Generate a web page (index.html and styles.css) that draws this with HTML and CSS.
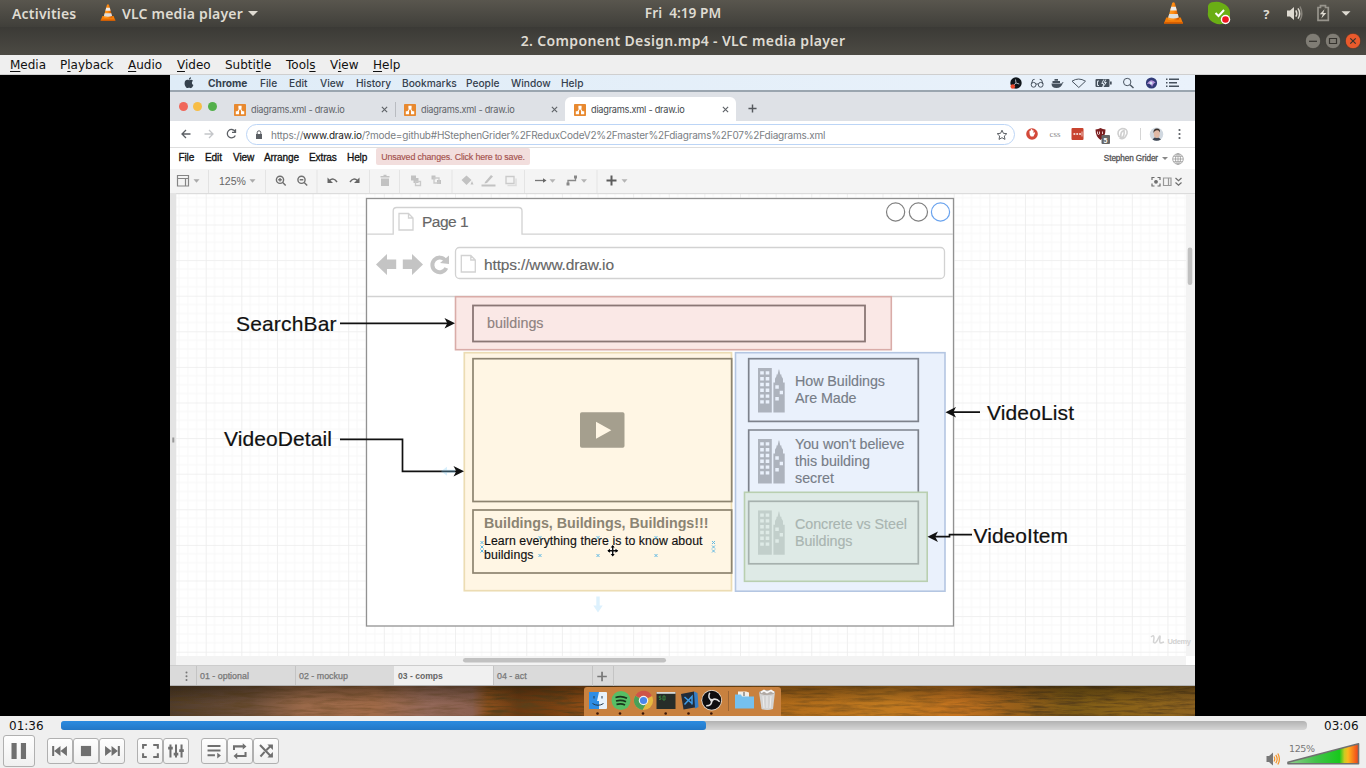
FILE: index.html
```html
<!DOCTYPE html>
<html lang="en">
<head>
<meta charset="utf-8">
<title>2. Component Design.mp4 - VLC media player</title>
<link rel="stylesheet" href="styles.css">
</head>
<body>
<svg class="defs" width="0" height="0" aria-hidden="true">
  <defs>
    <linearGradient id="coneFill"><stop offset="0" stop-color="#ffa02c"/><stop offset=".5" stop-color="#ff8a10"/><stop offset="1" stop-color="#c95000"/></linearGradient>
    <symbol id="cone" viewBox="0 0 18 20">
      <path d="M2.4 14.2H15.6L17.6 19.4H.4Z" fill="#f47d08"/><path d="M.4 18.2H17.6V19.8H.4Z" fill="#d95f00"/>
      <path d="M7.8.8Q9-.2 10.2.8L14.2 15.6Q9 18 3.8 15.6Z" fill="url(#coneFill)"/>
      <path d="M6.9 4.4H11.1L12 7.8H6Z" fill="#ececec"/><path d="M5.1 10.8H12.9L13.8 14Q9 15.8 4.2 14Z" fill="#dedede"/>
    </symbol>
    <symbol id="drawio" viewBox="0 0 12 12">
      <rect width="12" height="12" rx=".8" fill="#e8892f"/><path d="M6 4 3.4 8.5M6 4 8.6 8.5" stroke="#fff" stroke-width="1.1"/><path d="M4.4 1.8H7.6V4.8H4.4ZM1.8 7.2H5V10.2H1.8ZM7 7.2H10.2V10.2H7Z" fill="#fff"/>
    </symbol>
    <symbol id="towers" viewBox="0 0 27 45">
      <path fill-rule="evenodd" d="M0 0H13.8V44.5H0ZM2.2 3.2H5.8V6.6H2.2ZM7.7 3.2H11.3V6.6H7.7ZM2.2 9H5.8V12.4H2.2ZM7.7 9H11.3V12.4H7.7ZM2.2 14.8H5.8V18.2H2.2ZM7.7 14.8H11.3V18.2H7.7ZM2.2 20.6H5.8V24H2.2ZM7.7 20.6H11.3V24H7.7ZM2.2 26.4H5.8V29.8H2.2ZM7.7 26.4H11.3V29.8H7.7ZM2.2 32.2H5.8V35.6H2.2ZM7.7 32.2H11.3V35.6H7.7ZM15.4 14.5H17V10.8L18.5 8V6.5H19.6L20.7 1.4H21.2L22.3 6.5H23.4V8L25 10.8V14.5H26.7V44.5H15.4ZM17.3 17.3H20.8V20.8H17.3ZM21.7 22.8H25V26.3H21.7ZM17.3 29H20.8V32.5H17.3Z" fill="currentColor"/>
    </symbol>
  </defs>
</svg>

<header class="panel">
  <div class="panel-left"><span>Activities</span><svg class="cone-s"><use href="#cone"/></svg><span>VLC media player</span><i class="caret"></i></div>
  <div class="clock">Fri&nbsp; 4:19 PM</div>
  <svg class="tray" viewBox="1160 0 206 27">
    <svg x="1163.5" y="2" width="20" height="22"><use href="#cone"/></svg>
    <path d="M1208 6Q1209 2 1214 2Q1218 1 1222 3Q1230 6 1230 13Q1231 23 1222 24Q1215 25 1210 20Q1207 16 1208 12Z" fill="#6aae14"/>
    <path d="m1215.5 13 3 3 5.5-6" fill="none" stroke="#fff" stroke-width="2"/>
    <circle cx="1225.5" cy="19.5" r="4.7" fill="#fff"/><circle cx="1225.5" cy="19.5" r="3.3" fill="#ee1620"/>
    <text x="1263.2" y="19" class="help">?</text>
    <path d="M1287 10.5h3l4-3.6v13.2l-4-3.6h-3Z" fill="#dfdbd2"/>
    <path d="M1295.8 10.3q2 3.2 0 6.4M1298 8.4q3.4 5.1 0 10.2" stroke="#dfdbd2" fill="none" stroke-width="1.5"/><path d="M1300 6.5q3.6 7 0 14" stroke="#87837b" fill="none" stroke-width="1.5"/>
    <path d="M1318 7.5h2.5v-1.8h5v1.8h2.8v12.8H1318Z" fill="none" stroke="#97948c" stroke-width="1.7"/><path d="m1324.5 9.2-4.7 5h3l-1.5 4.2 5-5.4h-3Z" fill="#dfdbd2"/>
    <path d="M1341.5 11.3h9l-4.5 4.5Z" fill="#dfdbd2"/>
  </svg>
</header>

<div class="titlebar">
  <div class="title">2. Component Design.mp4 - VLC media player</div>
  <div class="winbtns">
    <svg viewBox="0 0 16 16"><circle cx="8" cy="8" r="7.7" class="wb"/><path d="M4 8.3h8" class="wg"/></svg>
    <svg viewBox="0 0 16 16"><circle cx="8" cy="8" r="7.7" class="wb"/><path d="M4.5 5.5h7v5h-7Z" class="wg"/></svg>
    <svg viewBox="0 0 16 16"><circle cx="8" cy="8" r="7.7" class="wx"/><path d="m5.3 5.3 5.4 5.4m0-5.4-5.4 5.4" class="wg"/></svg>
  </div>
</div>

<nav class="menubar">
  <span><u>M</u>edia</span><span>P<u>l</u>ayback</span><span><u>A</u>udio</span><span><u>V</u>ideo</span><span>Subti<u>t</u>le</span><span>Tool<u>s</u></span><span>V<u>i</u>ew</span><span><u>H</u>elp</span>
</nav>

<main class="video">
  <div class="frame">
    <div class="macbar">
      <svg class="apple" viewBox="0 0 10 12"><path d="M5 3.2C6 3 7.600 2 9 3.700 7.300 4.800 7.600 7.300 9.400 8.100 8.500 10.500 7.400 11.600 6.200 11 5.300 10.700 4.800 10.700 4 11 2.700 11.600.400 9 .600 6 .800 2.800 3.300 2.200 5 3.200ZM4.900 2.700C4.800 1.300 5.800.300 7 .200 7.100 1.500 6.200 2.700 4.900 2.700Z" fill="#35414d"/></svg>
      <b>Chrome</b><span>File</span><span>Edit</span><span>View</span><span>History</span><span>Bookmarks</span><span>People</span><span>Window</span><span>Help</span>
      <svg class="status" viewBox="1005 75 190 16">
        <circle cx="1016" cy="83" r="5.700" fill="#10161c"/><path d="m1016 83-.5-3.500m.5 3.500 3.300 1m-3.300-1-2.600 2.400" stroke="#aab2ba" fill="none"/><circle cx="1012.800" cy="86.500" r="2.300" fill="#ec4b2e"/>
        <g fill="none" stroke="#4a5561" stroke-width="1"><circle cx="1033.600" cy="84.800" r="2.400"/><circle cx="1040.700" cy="84.800" r="2.400"/><path d="M1036 84.300q1.100-1 2.200 0M1031.300 84l1.500-4.200 1.800-.4M1043 84l-1.500-4.200-1.800-.4"/><path d="M1072 81.200q6.500-4.300 13.500 0l-6.700 6.300Z"/><circle cx="1127.200" cy="82" r="3.700"/><path d="m1130 84.700 3.500 3.300" stroke-width="1.400"/></g>
        <path d="M1051.500 83.500h10q.5-1.200 1.200-1.300l1.300.8h-1.200q-1.300 5-6.300 5-5 0-5-4.500Zm1-2.500h7.500v2h-7.500Zm2-2h3.500v1.700h-3.500Z" fill="#46515d"/>
        <rect x="1095.500" y="79" width="14" height="8" rx="1" fill="#46515d"/><rect x="1110" y="81.500" width="1.700" height="3" fill="#46515d"/><path d="m1103.800 79.500-2 4h2l-1 3.500 3.500-4.500h-2l1.500-3" stroke="#dce6ef" fill="none"/><path d="M1099 81h-1.500v4.500h1.500" stroke="#dce6ef" fill="none"/>
        <circle cx="1151.500" cy="83" r="5.600" fill="#323b78"/><path d="M1147 84q4-7 9-1-2-1-4 4-1-4-5-3Z" fill="#b591d8"/><circle cx="1151" cy="83" r="1.500" fill="#d5e6f5"/>
        <path d="M1166 79.300h1.500m1.500 0h10M1166 82.800h1.500m1.500 0h8M1166 86.300h1.500m1.500 0h10" stroke="#46515d" stroke-width="1.600"/>
      </svg>
    </div>

    <div class="tabstrip">
      <div class="lights"><i></i><i></i><i></i></div>
      <div class="tab"><svg><use href="#drawio"/></svg><span>diagrams.xml - draw.io</span><svg class="x" viewBox="0 0 8 8"><path d="m1 1 6 6m0-6-6 6"/></svg></div>
      <div class="tab second"><svg><use href="#drawio"/></svg><span>diagrams.xml - draw.io</span><svg class="x" viewBox="0 0 8 8"><path d="m1 1 6 6m0-6-6 6"/></svg></div>
      <div class="tab active"><svg><use href="#drawio"/></svg><span>diagrams.xml - draw.io</span><svg class="x" viewBox="0 0 8 8"><path d="m1 1 6 6m0-6-6 6"/></svg></div>
      <svg class="plus" viewBox="0 0 10 10"><path d="M5 .500v9M.500 5h9"/></svg>
    </div>

    <div class="addressbar">
      <svg class="nav-icons" viewBox="170 121 76 26" fill="none" stroke-width="1.300"><path d="M190.500 134h-8.500m4-4-4 4 4 4" stroke="#5c6065"/><path d="M204.500 134h8.500m-4-4 4 4-4 4" stroke="#c4c6c9"/><path d="M235 131.300a4.200 4.200 0 1 0 .3 4.200M235.500 129.300v3h-3.500" stroke="#5c6065"/></svg>
      <div class="omnibox">
        <svg class="lock" viewBox="0 0 8 10"><path d="M1 4h6v5H1Z" fill="#5c6065"/><path d="M2.200 4V2.600a1.800 1.800 0 0 1 3.600 0V4" fill="none" stroke="#5c6065"/></svg>
        <div class="url">https://<em>www.draw.io</em>/?mode=github#HStephenGrider%2FReduxCodeV2%2Fmaster%2Fdiagrams%2F07%2Fdiagrams.xml</div>
        <svg class="star" viewBox="0 0 12 12"><path d="m6 1.200 1.400 3.100 3.400.4-2.500 2.300.7 3.400L6 8.700l-3 1.700.7-3.400L1.200 4.700l3.400-.4Z" fill="none" stroke="#5c6065"/></svg>
      </div>
      <svg class="ext" viewBox="1015 121 180 26">
        <circle cx="1032" cy="134" r="5.800" fill="#d3493a"/><path d="M1029.500 133v-2q.800-1 1.300 0v-1.500q.900-1 1.400 0v1q1-1 1.300 0v2.700l1-1q1 0 .4 1.300l-1.500 3h-2.500q-1.400-1.200-1.400-3.500Z" fill="#fff"/>
        <text x="1049.500" y="136.800" class="css">css</text>
        <rect x="1071.500" y="128" width="12" height="12" rx="1" fill="#c8432f"/><path d="M1073.500 134h1.800m1 0h1.800m1 0h1.800" stroke="#fff" stroke-width="1.600"/><path d="M1082 131.500v5" stroke="#fff" stroke-width=".7"/>
        <path d="M1095.500 129.500q3-.2 5-1.500 2 1.300 5 1.500 0 7-5 10.500-5-3.500-5-10.500Z" fill="#7a1f20"/><path d="M1097.500 131.500v2.500q1 1 2 0v-2.500m3 0v2.500" stroke="#e9c9c9" fill="none"/><rect x="1101.500" y="135" width="8.500" height="9" rx="1" fill="#666"/><text x="1103.600" y="142.500" class="badge">5</text>
        <path d="M1119 136.500q-3-6 3-8 6 0 5 5-2 6-6 5 4-2 3-8-4 1-3 7Z" fill="none" stroke="#cfcfcf" stroke-width="1.600"/>
        <path d="M1140.500 128v12" stroke="#d5d5d5"/>
        <circle cx="1156.500" cy="134.300" r="6.700" fill="#d0d8e0"/><path d="M1152.500 139.500q1.500-2.500 4-2.500t4.500 2.500q-4.500 2.500-8.500 0Z" fill="#3c4450"/><ellipse cx="1156.800" cy="133.800" rx="3" ry="4.300" fill="#e0b9a5"/><path d="M1153.500 133q-.5-4.500 3.500-4.500 3.500 0 3 4-1-2.500-3-2.200-2.500-.2-3.500 2.700Z" fill="#3b302b"/>
        <g fill="#5c6065"><circle cx="1179.500" cy="130" r="1.100"/><circle cx="1179.500" cy="134" r="1.100"/><circle cx="1179.500" cy="138" r="1.100"/></g>
      </svg>
    </div>

    <div class="appmenu">
      <span>File</span><span>Edit</span><span>View</span><span>Arrange</span><span>Extras</span><span>Help</span>
      <div class="unsaved">Unsaved changes. Click here to save.</div>
      <div class="user">Stephen Grider<i></i><svg viewBox="0 0 12 12" fill="none" stroke="#9a9a9a" stroke-width=".8"><circle cx="6" cy="6" r="5.300"/><ellipse cx="6" cy="6" rx="2.500" ry="5.300"/><path d="M6 .700v10.600M.700 6h10.600M1.500 3.300h9M1.500 8.700h9"/></svg></div>
    </div>

    <div class="toolbar">
      <svg class="t1" viewBox="170 169 49 24"><path d="M177.500 175.500h11v10.500h-11ZM177.500 178.500h11M185.500 178.500v7.500" fill="none" stroke="#858585" stroke-width="1.200"/><path d="M193.500 179.200h6l-3 3.500Z" fill="#aaa"/><path d="M208.500 170v23" stroke="#e2e2e2"/></svg>
      <span>125%</span>
      <svg class="t2" viewBox="246 169 390 24">
        <path d="M249.500 179.200h6l-3 3.500Z" fill="#aaa"/>
        <g stroke="#e4e4e4"><path d="M265.500 170v23M317 170v23M369.500 170v23M399.500 170v23M452 170v23M524.500 170v23M597 170v23"/></g>
        <g fill="none" stroke="#707070" stroke-width="1.400"><circle cx="280" cy="179.800" r="3.600"/><path d="m282.700 182.500 3 3M278.200 179.800h3.600M280 178v3.600"/><circle cx="301.500" cy="179.800" r="3.600"/><path d="m304.200 182.500 3 3M299.700 179.800h3.600"/></g>
        <path d="M329.500 180.500q4-3.500 7.500 1.500" fill="none" stroke="#666" stroke-width="1.500"/><path d="M327.500 177.500v5.500h5.500Z" fill="#666"/>
        <path d="M357.500 180.500q-4-3.500-7.500 1.500" fill="none" stroke="#666" stroke-width="1.500"/><path d="M359.500 177.500v5.500h-5.500Z" fill="#666"/>
        <g fill="#c2c2c2"><path d="M380.500 176h9v1.500h-9ZM383.500 174.800h3v1.500h-3ZM381 178.500h8v7.500h-8Z"/><path d="M411 175.500h5v5h-5ZM413.500 178h5v5h-5Z"/><path d="M431.500 175.500h4v4h-4ZM437 180h4v4h-4Z"/><path d="m461.500 180 5-4.500 5 4.500-5 5Zm10.500 1 1.500 3.500h-3Z"/><path d="m485 182 6-7 2 1.500-6 6.500-2.500.5ZM481.500 184.500h14v2h-14Z"/></g>
        <path d="M415.500 181.500h5v4h-5ZM434 178h5v5h-5ZM506 176.500h8v7h-8Z" fill="none" stroke="#cacaca" stroke-width="1.300"/><path d="M507.500 185.500h8.500v-7" stroke="#ddd" fill="none" stroke-width="1.500"/>
        <path d="M535 180.500h9" stroke="#777" stroke-width="1.300"/><path d="m543 178.300 3.500 2.200-3.500 2.200Z" fill="#666"/><path d="M568 184.500v-4h7.500v-3.500" stroke="#888" fill="none" stroke-width="1.300"/><path d="M566.500 182.500h3v3h-3ZM574 175.500h3v3h-3Z" fill="#888"/>
        <path d="M549.500 179.200h6l-3 3.500ZM581 179.200h6l-3 3.500ZM621.500 179.200h6l-3 3.500Z" fill="#b4b4b4"/>
        <path d="M611.500 175.500v10M606.500 180.500h10" stroke="#5c5c5c" stroke-width="2"/>
      </svg>
      <svg class="t3" viewBox="1145 169 50 24" fill="none" stroke="#6d6d6d" stroke-width="1.200"><path d="M1152 180v-2.500h2.500M1157.500 177.500h2.500v2.500M1152 183.500v2.500h2.500M1157.500 186h2.500v-2.500"/><circle cx="1156" cy="181.800" r="1.300" fill="#6d6d6d"/><path d="M1163.500 178h7.500v7.500h-7.500ZM1168.500 178v7.500" stroke="#999"/><path d="m1175.500 178 3 2.700 3-2.700M1175.500 182.500l3 2.700 3-2.700"/></svg>
    </div>

    <svg class="canvas" viewBox="170 193 1025 472">
      <defs>
        <pattern id="grid" x="205.700" y="224.500" width="35.620" height="35.600" patternUnits="userSpaceOnUse">
          <path d="M8.900 0v35.600M17.800 0v35.600M26.700 0v35.600M0 8.900h35.600M0 17.800h35.600M0 26.700h35.600" stroke="#f8f8f8"/><path d="M0 0V35.600M0 0H35.600" stroke="#ececec" stroke-width="1.600"/>
        </pattern>
      </defs>
      <rect x="170" y="193" width="1025" height="472" fill="#fff"/>
      <rect x="176" y="194" width="1010" height="462" fill="url(#grid)"/>
      <rect x="170" y="193" width="6.300" height="472" fill="#e4e4e4"/><path d="M173.300 437.500v5" stroke="#999" stroke-width="2"/>
      <rect x="176" y="193" width="1019" height="1.200" fill="#dcdcdc"/>
      <rect x="1186" y="194" width="9" height="462" fill="#f3f3f3"/><rect x="1187.700" y="247.500" width="4.600" height="37.500" rx="2.300" fill="#c1c1c1"/>
      <rect x="176" y="656" width="1010" height="9" fill="#f3f3f3"/><rect x="463" y="658" width="203" height="4.600" rx="2.300" fill="#c1c1c1"/>

      <rect x="366.500" y="198.500" width="587" height="427.500" fill="#fff" stroke="#929292" stroke-width="1.300"/>
      <g fill="none" stroke="#d2d2d2" stroke-width="1.300"><path d="M367 234.200H393.200V211q0-3.500 3.500-3.500H518.500q3.500 0 3.500 3.500V234.200H953M367 296.500H953"/><rect x="455.500" y="247.500" width="489" height="31" rx="4"/><path d="M399 213.500h9.500l4.500 4.500v12h-14ZM408.500 213.500v4.500h4.500M461.300 255.500h9.500l4.500 4.500v12h-14ZM470.800 255.500v4.500h4.500"/></g>
      <text x="422" y="226.700" class="g15" textLength="46.500">Page 1</text>
      <g fill="none" stroke="#808080" stroke-width="1.200"><circle cx="895.600" cy="212" r="9.100"/><circle cx="918.400" cy="212" r="9.100"/><circle cx="940.500" cy="212" r="9.100" stroke="#6aa3ee"/></g>
      <path d="M376 264.500 387 254v5.500h9.200v9.500H387v6ZM423 264.500 412 254v5.500h-9.200v9.500h9.200v6Z" fill="#c4c4c4"/>
      <path d="M445.500 260.500a7.300 7.300 0 1 0 .8 7.500" fill="none" stroke="#c4c4c4" stroke-width="4"/><path d="M449 255.500v8.500l-9-1Z" fill="#c4c4c4"/>
      <text x="484" y="269.700" class="g15" textLength="130">https://www.draw.io</text>

      <rect x="455.500" y="296.700" width="435.800" height="53" fill="#fae8e6" stroke="#d9aca8" stroke-width="1.600"/>
      <rect x="473" y="305.500" width="392" height="36" fill="none" stroke="#8a7775" stroke-width="1.800"/>
      <text x="487" y="327.700" class="g15 bld" textLength="56.500">buildings</text>

      <rect x="464.300" y="352.700" width="267.200" height="238" fill="#fff6e4" stroke="#ecdcb3" stroke-width="1.700"/>
      <g fill="none" stroke="#8d8470" stroke-width="1.700"><rect x="473" y="358.700" width="258.700" height="142.800"/><rect x="473" y="510" width="258.700" height="63"/></g>
      <rect x="580" y="412.300" width="44.500" height="35.500" rx="1.800" fill="#a59f8e"/><path d="M596 421.800v17l15.300-8.600Z" fill="#fff6e4"/>
      <text x="484" y="528" class="bt" textLength="224.500">Buildings, Buildings, Buildings!!!</text>
      <text x="484" y="544.700" class="learn" textLength="218.500">Learn everything there is to know about</text><text x="484" y="559" class="learn" textLength="49.500">buildings</text>
      <path d="m480.500 541 3 3m0-3-3 3m0 1.500 3 3m0-3-3 3m0 1 3 3m0-3-3 3M712 541l3 3m0-3-3 3m0 1.500 3 3m0-3-3 3m0 1 3 3m0-3-3 3M538.500 536l3 3m0-3-3 3m0 15 3 3m0-3-3 3M596.500 536l3 3m0-3-3 3m0 15 3 3m0-3-3 3M654.500 536l3 3m0-3-3 3m0 15 3 3m0-3-3 3" stroke="#62b9e3" stroke-width="1"/>
      <path d="M612.700 545.500v10M607.700 550.500h10" stroke="#fff" stroke-width="3"/><path d="M612.700 546v9.500M608 550.700h9.500" stroke="#111" stroke-width="1.400"/><path d="m610.700 547.500 2-2.500 2 2.500ZM610.700 554l2 2.500 2-2.500ZM610 548.700l-2.700 2 2.700 2ZM615.500 548.700l2.700 2-2.700 2Z"/>
      <path d="M596.300 596.500h3.400v9h3l-4.700 7-4.700-7h3Z" fill="#ddf1fd"/>

      <rect x="735.500" y="352.700" width="209.500" height="238.500" fill="#eaf1fc" stroke="#b4c6e2" stroke-width="1.600"/>
      <g fill="none" stroke="#7d828c" stroke-width="1.700"><rect x="748.700" y="358.700" width="169.600" height="62.700"/><path d="M748.700 493V430H918.300V493"/></g>
      <rect x="744.500" y="492.300" width="182.700" height="89" fill="#deeae6" stroke="#b9cfb0" stroke-width="1.600"/>
      <rect x="748.700" y="501.300" width="169.600" height="62.500" fill="none" stroke="#a6b1ae" stroke-width="1.700"/>
      <svg x="758" y="368" width="27" height="45" color="#adb3bd"><use href="#towers"/></svg><svg x="758" y="439" width="27" height="45" color="#adb3bd"><use href="#towers"/></svg><svg x="758" y="510.200" width="27" height="45" color="#c2cfcb"><use href="#towers"/></svg>
      <g class="item"><text x="795" y="386" textLength="90">How Buildings</text><text x="795" y="403" textLength="61.500">Are Made</text><text x="795" y="448.700" textLength="109.500">You won't believe</text><text x="795" y="465.700" textLength="75">this building</text><text x="795" y="482.600" textLength="39">secret</text></g>
      <g class="item faded"><text x="795" y="528.500" textLength="112">Concrete vs Steel</text><text x="795" y="545.500" textLength="57.500">Buildings</text></g>

      <g class="label"><text x="236" y="330.500" textLength="100.500">SearchBar</text><text x="224" y="446" textLength="108">VideoDetail</text><text x="987" y="420" textLength="87">VideoList</text><text x="973.500" y="542.500" textLength="94.500">VideoItem</text></g>
      <path d="M340 323.300H448M340 439.300H402.500V471.300H457M980 412.200H952M972 534.700H949.500V536.700H935" fill="none" stroke="#111" stroke-width="1.700"/>
      <path d="M441 471.200l6-4.500v3h8v3h-8v3Z" fill="#7ccaf5" opacity=".3"/>
      <path d="m455 323.300-10.500-5.200 2.800 5.200-2.800 5.200ZM464 471.300l-10.500-5.200 2.800 5.200-2.800 5.200ZM945.500 412.200l10.500-5.200-2.800 5.200 2.800 5.200ZM927.500 536.700l10.500-5.200-2.800 5.200 2.800 5.200Z" fill="#111"/>
      <path d="M1151 637q3-3 3 1l-.5 4q2 3 5-4 2-4 1.500 0-1 5 1 5 3-1 3-1" fill="none" stroke="#d4d4d4" stroke-width="1.500"/><text x="1167.500" y="643.500" class="udemy" textLength="23.500">Udemy</text>
    </svg>

    <div class="sheets">
      <svg class="dots" viewBox="0 0 20 21" fill="#777"><circle cx="10.500" cy="6.500" r="1"/><circle cx="10.500" cy="10.300" r="1"/><circle cx="10.500" cy="14" r="1"/></svg>
      <span>01 - optional</span><span>02 - mockup</span><span class="on">03 - comps</span><span>04 - act</span>
      <svg class="add" viewBox="0 0 21 21"><path d="M9.500 5.500v10M4.500 10.500h10"/></svg>
    </div>

    <div class="desktop">
      <svg class="wood" viewBox="0 0 1025 29" preserveAspectRatio="none">
        <defs>
          <linearGradient id="woodBase">
            <stop offset="0" stop-color="#4f3c2c"/><stop offset=".08" stop-color="#6d4f3a"/><stop offset=".13" stop-color="#9a694a"/><stop offset=".2" stop-color="#a06a48"/><stop offset=".25" stop-color="#94695a"/><stop offset=".295" stop-color="#8a6050"/><stop offset=".31" stop-color="#8a4f1c"/><stop offset=".34" stop-color="#6a3a12"/><stop offset=".37" stop-color="#743f12"/><stop offset=".4" stop-color="#8a4a14"/><stop offset=".6" stop-color="#b26c1a"/><stop offset=".7" stop-color="#c17a20"/><stop offset=".77" stop-color="#c4731f"/><stop offset=".82" stop-color="#9a601a"/><stop offset=".88" stop-color="#7c5a16"/><stop offset=".93" stop-color="#8a6218"/><stop offset="1" stop-color="#8f6420"/>
          </linearGradient>
          <linearGradient id="woodShade" x2="0" y2="1"><stop offset="0" stop-color="#1a1205" stop-opacity=".45"/><stop offset=".6" stop-color="#1a1205" stop-opacity="0"/></linearGradient>
          <filter id="grain" x="0" y="0" width="1" height="1"><feTurbulence type="fractalNoise" baseFrequency=".035 .33" numOctaves="5" seed="21"/><feColorMatrix values="0 0 0 0 .1  0 0 0 0 .05  0 0 0 0 .01  2.6 0 0 0 -1.05"/></filter>
          <linearGradient id="fade"><stop offset="0" stop-color="#fff" stop-opacity=".7"/><stop offset=".13" stop-color="#fff" stop-opacity=".35"/><stop offset=".29" stop-color="#fff" stop-opacity=".3"/><stop offset=".32" stop-color="#fff"/><stop offset=".42" stop-color="#fff"/><stop offset=".6" stop-color="#fff" stop-opacity=".45"/><stop offset=".77" stop-color="#fff" stop-opacity=".4"/><stop offset=".84" stop-color="#fff" stop-opacity=".9"/><stop offset="1" stop-color="#fff" stop-opacity=".8"/></linearGradient>
          <mask id="grainMask"><rect width="1025" height="29" fill="url(#fade)"/></mask>
        </defs>
        <rect width="1025" height="29" fill="url(#woodBase)"/><g mask="url(#grainMask)"><rect width="1025" height="29" filter="url(#grain)"/></g><rect width="1025" height="29" fill="url(#woodShade)"/>
      </svg>
      <svg class="dock" viewBox="584 687 197 29">
        <rect x="584" y="687" width="197" height="34" rx="3" fill="#c8813f"/>
        <rect x="589" y="692" width="18" height="17" rx="1" fill="#e8f2fa"/><path d="M589 692h10l-2 9h2v8h-10Z" fill="#2f8de4"/><path d="M594 696v2.500m8-2.500v2.500M592.500 703.500q5.500 3.500 11 0" stroke="#26394b" fill="none"/>
        <circle cx="621" cy="700.500" r="9.500" fill="#57be65"/><path d="M615.500 697.500q6-2 11.500.8M616 701q5.500-1.500 10 .8M616.500 704.300q5-1.200 8.500.6" fill="none" stroke="#18351d" stroke-width="1.700"/>
        <circle cx="643.500" cy="700.500" r="9.600" fill="#e6b83f"/><path d="M643.500 700.500 635.200 695.700A9.600 9.600 0 0 1 652 695.900Z" fill="#cf5448"/><path d="M643.500 700.500 635.200 695.700A9.600 9.600 0 0 0 642.500 710L647 702Z" fill="#4ba058"/><circle cx="643.500" cy="700.500" r="4.700" fill="#f3f3f3"/><circle cx="643.500" cy="700.500" r="3.600" fill="#4a86ea"/>
        <rect x="656.500" y="692" width="19" height="17" fill="#272d29"/><rect x="656.500" y="692" width="19" height="1.800" fill="#d8dad8"/><path d="M661 696q-2.500 0-2 1.500l2 .5q.5 2-2 1.500M663 696h2v4h-2Z" stroke="#36843c" fill="none"/>
        <path d="m681 694 13-2.500 3.500 15.500-14 2.500Z" fill="#222c39"/><path d="M694 691.500l3.500 1.500 1 14-3.500 1.500Z" fill="#357dc4"/><path d="m684.500 697 7.500 6.500m-7.500 1 7.500-8v8" fill="none" stroke="#3f9ce8" stroke-width="1.500"/>
        <circle cx="711.700" cy="700.300" r="10.300" fill="#e8e2da"/><circle cx="711.700" cy="700.300" r="9.500" fill="#0d0d10"/><path d="M711.700 700.300q-4.500-2-2-7.500M711.700 700.300q4-3 8 1.500M711.700 700.300q.5 5.500-5.500 5.500" fill="none" stroke="#e0e0e0" stroke-width="1.500"/><circle cx="711.700" cy="700.300" r="1.500" fill="#e0e0e0"/>
        <path d="M728.500 691v20" stroke="#9d6634"/>
        <path d="M738 691.500h8l3 1v5h-11Z" fill="#f2eee8"/><path d="M744 692v4" stroke="#555"/><path d="M735 694.500h6l1 2h12v12h-19Z" fill="#75c0ee"/>
        <path d="M759 692h16l-2 17q-6 2-11.500 0Z" fill="#d3d3d3"/><ellipse cx="767" cy="692.500" rx="8" ry="2.500" fill="#b1aaa5"/><path d="m761 692.500 3-2 3 2 4-2 3 2" stroke="#f7f7f7" fill="none" stroke-width="1.700"/><path d="m763 696 1 12m3-12v12m4-12-1 12" stroke="#eee"/>
        <g fill="#3b1708"><circle cx="597.500" cy="713.500" r="1.300"/><circle cx="620" cy="713.500" r="1.300"/><circle cx="643" cy="713.500" r="1.300"/><circle cx="665.700" cy="713.500" r="1.300"/><circle cx="688.500" cy="713.500" r="1.300"/><circle cx="711.300" cy="713.500" r="1.300"/></g>
      </svg>
    </div>
  </div>
</main>

<footer class="controls">
  <div class="seek"><span>01:36</span><div class="track"><div class="fill"></div></div><span class="total">03:06</span></div>
  <div class="buttons">
    <div class="group big"><button><svg viewBox="0 0 32 32"><path d="M8 7.500h5.500v17H8ZM18 7.500h5.500v17H18Z"/></svg></button></div>
    <div class="group">
      <button><svg viewBox="0 0 26 26"><path d="M4.500 7.500h2.200v11H4.500ZM6.700 13 13.500 7.500v11ZM13.500 13l7-5.500v11Z"/></svg></button>
      <button><svg viewBox="0 0 26 26"><path d="M7.500 7.500h11v11h-11Z"/></svg></button>
      <button><svg viewBox="0 0 26 26"><path d="M19.300 7.500h2.200v11h-2.200ZM19.300 13 12.500 7.500v11ZM12.500 13l-7-5.500v11Z"/></svg></button>
    </div>
    <div class="group two">
      <button><svg viewBox="0 0 26 26"><path d="M5.500 10.500v-4h4M16.500 6.500h5v4M5.500 15.500v4h4M16.500 19.500h5v-4" class="s"/></svg></button>
      <button><svg viewBox="0 0 26 26"><path d="M7 6v14M13 6v14M19 6v14" class="s"/><path d="M4.500 8.500h5v3h-5ZM10.500 15h5v3h-5ZM16.500 11h5v3h-5Z"/></svg></button>
    </div>
    <div class="group three">
      <button><svg viewBox="0 0 26 26"><path d="M6 7.500h14M6 12.500h14M6 17.500h8" class="s"/><path d="M16.500 15v6l4-3Z"/></svg></button>
      <button><svg viewBox="0 0 26 26"><path d="M6.500 12V8H17M19 14v4.500H9" class="s"/><path d="M16 4.500v7l4-3.500ZM10 15v7l-4-3.500Z"/></svg></button>
      <button><svg viewBox="0 0 26 26"><path d="m6.500 6.500 11.500 12M7 19l4.500-5m2-2L18 7.500" class="s"/><path d="M14.500 6h6v6ZM14.500 20h6v-6Z"/></svg></button>
    </div>
    <svg class="volume" viewBox="1260 735 106 33">
      <defs><linearGradient id="vol"><stop offset="0" stop-color="#93cc8f"/><stop offset=".4" stop-color="#42c24a"/><stop offset=".73" stop-color="#18c81c"/><stop offset=".8" stop-color="#c9cc22"/><stop offset=".85" stop-color="#ffb71c"/><stop offset="1" stop-color="#ef3e1c"/></linearGradient></defs>
      <path d="M1266.500 756h2.500l4-3.500v13l-4-3.500h-2.500Z" fill="#777"/><path d="M1274 756.500q1.500 2.500 0 5M1275.800 754.800q2.800 4.200 0 8.400M1277.800 753.500q3.200 5.500 0 11" fill="none" stroke="#f69324" stroke-width="1.200"/>
      <path d="M1288 762.300 1358.500 743.800V763.800H1288Z" fill="url(#vol)" stroke="#707070" stroke-width="1.600" stroke-linejoin="round"/>
      <text x="1289" y="752" textLength="26">125%</text>
    </svg>
  </div>
</footer>
</body>
</html>
```
FILE: styles.css
```css
* { box-sizing: border-box; }
body { margin: 0; width: 1366px; height: 768px; overflow: hidden; background: #efefef; font-family: "DejaVu Sans", sans-serif; color: #111; display: flex; flex-direction: column; }
svg { display: block; flex: none; }
.defs { position: absolute; }

.panel, .titlebar { color: #dfdbd2; font: 600 14px/27px "Noto Sans", "Open Sans", sans-serif; display: grid; white-space: nowrap; }
.panel { height: 27px; grid-template-columns: 1fr 84px 1fr; background: linear-gradient(#59564e, #403f3a); }
.panel-left { display: flex; padding-left: 12px; letter-spacing: .2px; }
.panel-left span:first-child { width: 88px; }
.cone-s { width: 16px; height: 17px; margin: 4px 6px 0 0; }
.caret { border: 5px solid transparent; border-top-color: #dfdbd2; border-bottom: 0; height: 0; margin: 11px 0 0 5px; }
.clock { text-align: center; font-size: 13.7px; line-height: 26px; }
.tray { width: 206px; height: 27px; justify-self: end; }
.help { font: 700 13px "Open Sans", sans-serif; fill: #dfdbd2; }
.titlebar { height: 28px; grid-template-columns: 70px 1fr 70px; background: linear-gradient(#3b3a36, #4c4a44); line-height: 28px; letter-spacing: .35px; }
.title { grid-column: 2; text-align: center; }
.winbtns { display: flex; gap: 4px; align-items: center; padding-left: 9px; }
.winbtns svg { width: 16px; height: 16px; }
.wb { fill: #807d75; stroke: #33322e; stroke-width: .6; }
.wx { fill: #ea5a2c; stroke: #33322e; stroke-width: .6; }
.wg { fill: none; stroke: #35332e; stroke-width: 1.2; }

.menubar { height: 20px; border-bottom: 1px solid #cfcfcf; display: grid; grid-template-columns: 50px 68px 49px 48px 61px 44px 43px 60px; padding-left: 10px; font-size: 12px; line-height: 20px; }
.menubar u { text-underline-offset: 2px; }

.video { height: 641px; background: #000; display: flex; padding-left: 170px; }
.frame { width: 1025px; display: flex; flex-direction: column; font-family: Inter, Roboto, sans-serif; background: #fff; }
.macbar { height: 17px; display: grid; grid-template-columns: 38px 52px 29px 31px 36px 46px 64px 45px 50px 1fr 190px; background: linear-gradient(90deg, #dfecf7, #eaf2fb); border-bottom: 2px solid #9aa5af; font-size: 10.2px; font-weight: 500; line-height: 17px; color: #35414d; }
.apple { width: 10px; height: 12px; margin: 2px 0 0 14px; }
.status { width: 190px; height: 16px; }

.tabstrip { height: 29px; background: #dee1e6; display: flex; font-size: 9.2px; letter-spacing: -.25px; color: #5f6368; }
.lights { width: 55px; padding: 10px 0 0 9px; display: flex; gap: 5.3px; }
.lights i { width: 9px; height: 9px; border-radius: 50%; background: #f0675a; }
.lights i:nth-child(2) { background: #f7bd45; }
.lights i:nth-child(3) { background: #53b04b; }
.tab { width: 170px; height: 25px; margin-top: 5px; padding: 0 7px 0 9px; display: flex; align-items: center; }
.tab svg { width: 12px; height: 12px; margin-right: 5px; }
.tab span { flex: 1; }
.tab .x { width: 7px; height: 7px; margin: 0; }
.x path { stroke: #5f6368; stroke-width: 1.3; }
.tab.second { border-left: 1px solid #b9bcc1; border-image: linear-gradient(#dee1e6 22%, #b9bcc1 22% 78%, #dee1e6 78%) 1; padding-left: 8px; }
.tab.active { background: #fff; border-radius: 6px 6px 0 0; color: #45494d; width: 171px; }
.plus { width: 9px; height: 9px; margin: 12px 0 0 12px; }
.plus path { stroke: #55595e; stroke-width: 1.6; }

.addressbar { height: 27px; display: flex; background: #fff; border-bottom: 1px solid #dedede; }
.nav-icons { width: 76px; height: 26px; }
.omnibox { width: 769px; height: 21px; margin-top: 3px; border: 1.5px solid #bcd5f6; border-radius: 11px; display: flex; align-items: center; padding: 0 6px 0 8px; font-size: 10px; letter-spacing: -.21px; color: #7a7e83; white-space: nowrap; }
.lock { width: 8px; height: 10px; margin-right: 8px; }
.url { flex: 1; }
.url em { font-style: normal; color: #222; }
.star { width: 12px; height: 12px; }
.ext { width: 180px; height: 26px; }
.css { font: 9px "Liberation Serif", serif; fill: #888; }
.badge { font: 700 7px "Liberation Sans", sans-serif; fill: #fff; }

.appmenu { height: 21px; display: grid; grid-template-columns: 26.5px 28px 31px 45px 38px 29px 154px 1fr; padding-left: 8.500px; font: 10.1px/20px "Liberation Sans", sans-serif; letter-spacing: -.15px; color: #111; white-space: nowrap; -webkit-text-stroke: .3px; }
.unsaved { height: 17px; background: #f2dedd; border-radius: 2px; color: #a5524d; font-size: 8.9px; line-height: 18px; text-align: center; -webkit-text-stroke: .15px; }
.user { display: flex; justify-content: flex-end; align-items: center; padding-right: 11px; font-size: 8.2px; letter-spacing: -.1px; color: #555; }
.user i { border: 3px solid transparent; border-top-color: #888; border-bottom: 0; margin: 0 4px; }
.user svg { width: 12px; height: 12px; }

.toolbar { height: 24px; background: #f4f4f4; display: flex; font: 10.5px/24px "Liberation Sans", sans-serif; color: #666; }
.t1 { width: 49px; height: 24px; }
.toolbar span { width: 27px; }
.t2 { width: 390px; height: 24px; }
.t3 { width: 50px; height: 24px; margin-left: auto; }

.canvas { width: 1025px; height: 472px; font-family: "Liberation Sans", sans-serif; }
.g15 { font-size: 15.5px; fill: #666; stroke: #666; stroke-width: .15; }
.bld { font-size: 14.3px; fill: #8e8280; stroke: #8e8280; }
.bt { font-size: 14.3px; font-weight: 700; fill: #8b8473; }
.learn { font-size: 12.3px; fill: #111; stroke: #111; stroke-width: .15; }
.item { font-size: 14.3px; fill: #777d87; stroke: #777d87; stroke-width: .15; }
.faded { fill: #a9b5b1; stroke: #a9b5b1; }
.label { font-size: 21px; fill: #111; stroke: #111; stroke-width: .2; }
.udemy { font-size: 7.5px; font-weight: 700; fill: #d2d2d2; }

.sheets { height: 21px; background: #dadada; display: flex; border-bottom: 1px solid #b4b4b4; border-top: 1px solid #cdcdcd; font: 8.9px/21px "Liberation Sans", sans-serif; color: #777; padding-left: 6px; -webkit-text-stroke: .25px; }
.sheets span { width: 99px; border-left: 1px solid #c4c4c4; padding-left: 3px; }
.sheets .on { background: #f0f0f0; font-weight: 700; font-size: 8.6px; color: #666; border-color: #f0f0f0; -webkit-text-stroke: 0; }
.dots { width: 20px; height: 21px; }
.add { width: 22px; height: 21px; border: 1px solid #c4c4c4; border-width: 0 1px; }
.add path { stroke: #777; stroke-width: 1.800; }

.desktop { height: 30px; display: grid; grid-template-columns: 414px 197px 1fr; }
.wood { width: 1025px; height: 30px; grid-area: 1 / 1 / 2 / 4; }
.dock { width: 197px; height: 29px; grid-area: 1 / 2; margin-top: 1px; }

.controls { height: 52px; background: #efefef; }
.seek { height: 18px; display: grid; grid-template-columns: 52px 1246px 1fr; padding-left: 9px; font-size: 12px; line-height: 20px; }
.track { height: 9px; margin-top: 4.500px; border-radius: 4px; background: linear-gradient(#b2b2b2, #d6d6d6); }
.fill { width: 645px; height: 9px; border-radius: 3px; background: linear-gradient(#2b8be0, #2377c6); }
.total { padding-left: 17px; }
.buttons { height: 34px; display: flex; align-items: center; padding-left: 3px; }
.group { display: flex; margin-left: 12px; }
.group.big { margin-left: 0; }
.group button { width: 26px; height: 26px; padding: 0; border: 1px solid #b0b0b0; border-radius: 3px; background: linear-gradient(#fefefe, #f0f0f0); }
.group.big button { width: 32px; height: 32px; }
.group button svg { width: 24px; height: 24px; fill: #6f6f6f; }
.group.big button svg { width: 30px; height: 30px; }
.s { fill: none; stroke: #6f6f6f; stroke-width: 2.2; }
.volume { width: 106px; height: 33px; margin-left: auto; font-size: 9.5px; fill: #777; }
```
